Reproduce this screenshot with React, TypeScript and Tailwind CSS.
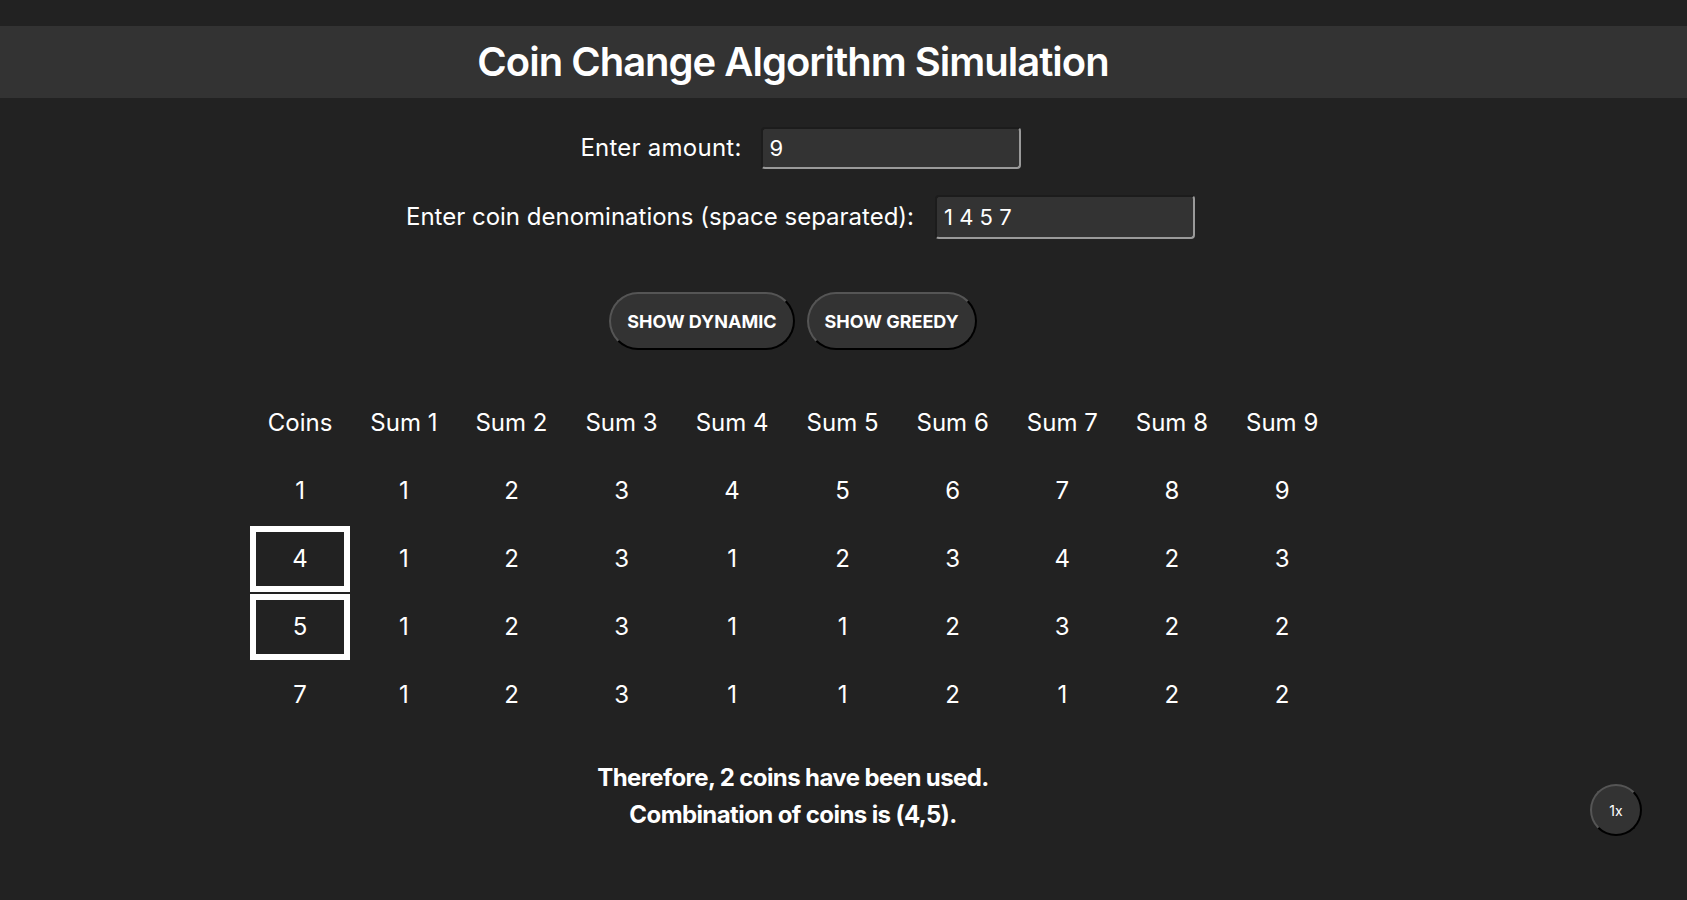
import React from "react"

const sums = [1, 2, 3, 4, 5, 6, 7, 8, 9]

const rows = [
  { coin: 1, vals: [1, 2, 3, 4, 5, 6, 7, 8, 9], picked: false },
  { coin: 4, vals: [1, 2, 3, 1, 2, 3, 4, 2, 3], picked: true },
  { coin: 5, vals: [1, 2, 3, 1, 1, 2, 3, 2, 2], picked: true },
  { coin: 7, vals: [1, 2, 3, 1, 1, 2, 1, 2, 2], picked: false },
]

const cell = "border-[6px] px-3 py-3 text-[24px] leading-[30px] text-center font-normal"

const App: React.FC = () => {
  return (
    <div className="min-h-screen bg-[#222222] text-white font-['Inter',sans-serif] pt-[26px]">
      <header className="bg-[#333333] h-[72px] flex items-center justify-center pr-[101px]">
        <h1 className="text-[40px] font-semibold tracking-tight">Coin Change Algorithm Simulation</h1>
      </header>

      <main className="flex flex-col items-center pr-[101px]">
        <div className="mt-[29px] ml-[15px] flex items-center gap-[19px]">
          <label className="text-[24px] tracking-[0.01em]">Enter amount:</label>
          <input
            defaultValue="9"
            className="w-[260px] h-[42px] bg-[#333333] rounded-[4px] border-2 border-t-[#1c1c1c] border-l-[#1c1c1c] border-r-[#9a9a9a] border-b-[#9a9a9a] px-[7px] text-[22px] text-white outline-none"
          />
        </div>
        <div className="mt-[26px] ml-[15px] flex items-center gap-[21px]">
          <label className="text-[24px]">Enter coin denominations (space separated):</label>
          <input
            defaultValue="1 4 5 7"
            className="w-[260px] h-[44px] bg-[#333333] rounded-[4px] border-2 border-t-[#1c1c1c] border-l-[#1c1c1c] border-r-[#9a9a9a] border-b-[#9a9a9a] px-[7px] text-[22px] text-white outline-none"
          />
        </div>

        <div className="mt-[53px] flex gap-3">
          <button className="h-[58px] px-4 rounded-full bg-[#333333] border-2 border-t-[#555555] border-l-[#555555] border-r-black border-b-black text-[18px] font-bold">
            SHOW DYNAMIC
          </button>
          <button className="h-[58px] px-4 rounded-full bg-[#333333] border-2 border-t-[#555555] border-l-[#555555] border-r-black border-b-black text-[18px] font-bold">
            SHOW GREEDY
          </button>
        </div>

        <table className="mt-[38px] border-separate border-spacing-[2px]">
          <thead>
            <tr>
              <th className={`${cell} border-transparent`}>Coins</th>
              {sums.map((s) => (
                <th key={s} className={`${cell} border-transparent`}>Sum {s}</th>
              ))}
            </tr>
          </thead>
          <tbody>
            {rows.map((r) => (
              <tr key={r.coin}>
                <td className={`${cell} ${r.picked ? "border-white" : "border-transparent"}`}>{r.coin}</td>
                {r.vals.map((v, i) => (
                  <td key={i} className={`${cell} border-transparent`}>{v}</td>
                ))}
              </tr>
            ))}
          </tbody>
        </table>

        <div className="mt-[29px] text-center text-[24px] font-bold leading-[37px] tracking-tight">
          <p>Therefore, 2 coins have been used.</p>
          <p>Combination of coins is (4,5).</p>
        </div>
      </main>

      <button className="fixed right-[45px] bottom-[64px] w-[52px] h-[52px] rounded-full bg-[#333333] border-2 border-t-[#555555] border-l-[#555555] border-r-black border-b-black text-[14px]">
        1x
      </button>
    </div>
  )
}

export default App
